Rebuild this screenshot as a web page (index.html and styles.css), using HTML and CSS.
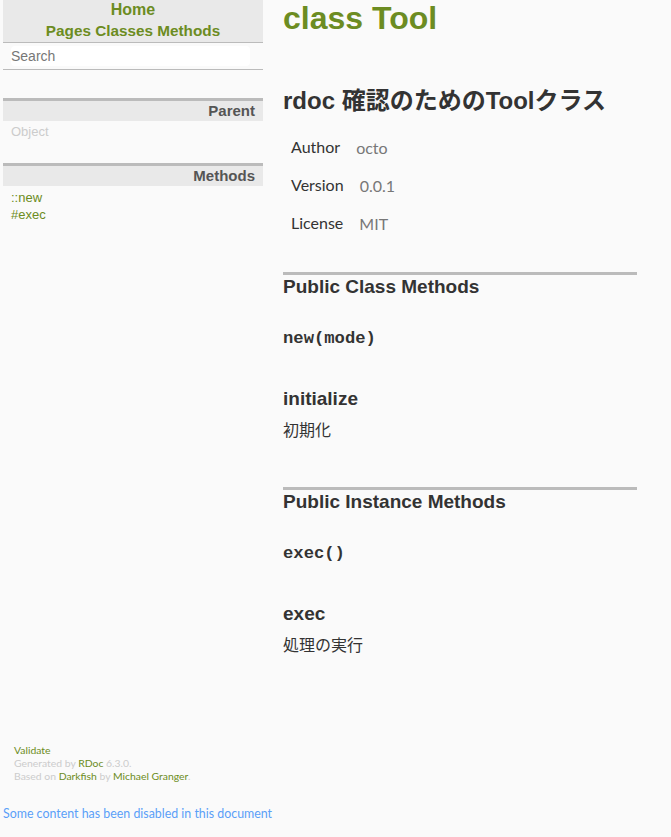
FILE: index.html
```html
<!DOCTYPE html>
<html>
<head>
<meta charset="utf-8">
<link rel="stylesheet" href="styles.css">
</head>
<body>
<div class="page">
  <nav class="sidebar">
    <div class="nav-head">
      <div class="home"><a href="#">Home</a></div>
      <div class="links"><a href="#">Pages</a> <a href="#">Classes</a> <a href="#">Methods</a></div>
    </div>
    <div class="search-row"><input class="search" type="text" placeholder="Search"></div>
    <div class="section parent-sec">
      <h3 class="sec-head">Parent</h3>
      <p class="parent">Object</p>
    </div>
    <div class="section methods-sec">
      <h3 class="sec-head">Methods</h3>
      <ul class="mlist">
        <li><a href="#">::new</a></li>
        <li><a href="#">#exec</a></li>
      </ul>
    </div>
  </nav>
  <main class="content">
    <h1 class="title">class Tool</h1>
    <h2 class="desc">rdoc 確認のためのToolクラス</h2>
    <dl class="meta">
      <div class="row"><dt>Author</dt><dd>octo</dd></div>
      <div class="row"><dt>Version</dt><dd>0.0.1</dd></div>
      <div class="row"><dt>License</dt><dd>MIT</dd></div>
    </dl>
    <section class="msec">
      <h2 class="msec-title">Public Class Methods</h2>
      <div class="sig">new(mode)</div>
      <h3 class="mname">initialize</h3>
      <p class="mdesc">初期化</p>
    </section>
    <section class="msec second">
      <h2 class="msec-title">Public Instance Methods</h2>
      <div class="sig">exec()</div>
      <h3 class="mname">exec</h3>
      <p class="mdesc">処理の実行</p>
    </section>
  </main>
</div>
<footer class="foot">
  <p><a href="#">Validate</a></p>
  <p>Generated by <a href="#">RDoc</a> 6.3.0.</p>
  <p>Based on <a href="#">Darkfish</a> by <a href="#">Michael Granger</a>.</p>
</footer>
<div class="notice">Some content has been disabled in this document</div>
</body>
</html>
```
FILE: styles.css
```css
html, body { margin: 0; padding: 0; background: #fafafa; }
body { font-family: Lato, "Noto Sans CJK JP", sans-serif; color: #333; }
a { color: #6c8c22; text-decoration: none; }
.page { display: flex; align-items: flex-start; padding-left: 3px; height: 744px; }
.sidebar { width: 260px; flex: none; font-family: "Liberation Sans", Arial, sans-serif; }
.nav-head { background: #e9e9e9; height: 42px; border-bottom: 1px solid #bbb; text-align: center; font-weight: bold; font-size: 16px; }
.home { padding-top: 0; line-height: 19px; }
.links { line-height: 24px; font-size: 15.3px; }
.search-row { height: 23px; padding: 3px 13px 0 8px; border-bottom: 1px solid #bbb; }
.search { display: block; width: 100%; box-sizing: border-box; height: 20px; border: none; border-radius: 4px; background: #fff; font-family: "Liberation Sans", Arial, sans-serif; font-size: 14px; padding: 0; color: #333; outline: none; }
.search::placeholder { color: #777; }
.section { border-top: 3px solid #bbb; }
.parent-sec { margin-top: 28px; }
.methods-sec { margin-top: 23px; }
.sec-head { margin: 0; background: #e9e9e9; text-align: right; font-size: 15px; font-weight: bold; color: #555; height: 20px; line-height: 20px; padding-right: 8px; }
.parent { margin: 3px 0 0 8px; font-size: 13px; color: #ccc; line-height: 16px; }
.mlist { list-style: none; margin: 3px 0 0 8px; padding: 0; font-size: 13px; line-height: 17px; }
.content { margin-left: 20px; width: 354px; }
.title { margin: 0; font-family: "Liberation Sans", Arial, sans-serif; color: #6c8c22; font-size: 32px; font-weight: bold; line-height: 36px; }
.desc { margin: 49px 0 0; font-size: 24px; font-weight: bold; line-height: 32px; font-family: "Liberation Sans", Arial, "Noto Sans CJK JP", sans-serif; color: #333; }
.meta { margin: 20px 0 0 8px; }
.row { display: flex; height: 38px; align-items: flex-start; font-size: 16px; line-height: 20px; }
.meta dt { color: #333; margin-right: 16px; }
.meta dd { margin: 0; color: #777; padding-top: 1px; }
.msec { border-top: 3px solid #bbb; margin-top: 21px; }
.msec.second { margin-top: 48px; }
.msec-title { margin: 0; font-family: "Liberation Sans", Arial, sans-serif; font-size: 19px; font-weight: bold; line-height: 24px; color: #333; }
.sig { margin-top: 30px; font-family: "Liberation Mono", monospace; font-weight: bold; font-size: 17.2px; line-height: 20px; color: #333; }
.mname { margin: 39px 0 0; font-family: "Liberation Sans", Arial, sans-serif; font-size: 19px; font-weight: bold; line-height: 22px; color: #333; }
.mdesc { margin: 9px 0 0; font-size: 16px; line-height: 20px; font-family: "Noto Sans CJK JP", sans-serif; color: #333; }
.foot { padding-left: 14px; font-size: 10.4px; color: #ccc; line-height: 13px; }
.foot p { margin: 0; }
.notice { margin: 23px 0 0 3px; color: #5a9ff8; font-size: 12.4px; line-height: 16px; }
```
